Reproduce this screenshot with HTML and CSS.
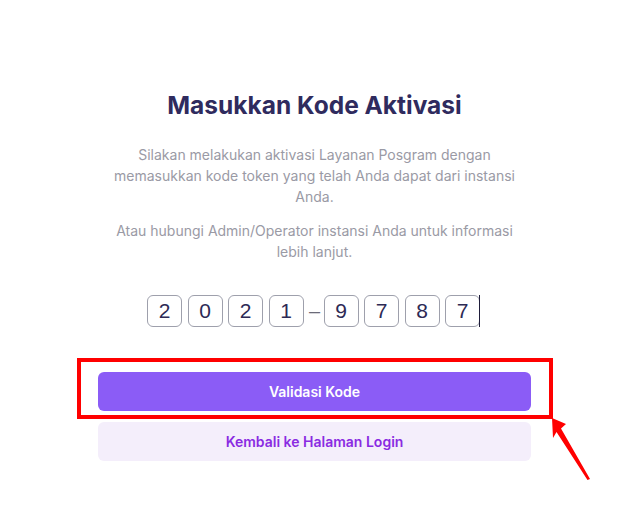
FILE: index.html
```html
<!DOCTYPE html>
<html lang="id">
<head>
<meta charset="utf-8">
<title>Masukkan Kode Aktivasi</title>
<link rel="stylesheet" href="styles.css">
</head>
<body>
<main class="page">
  <section class="card">
    <h1 class="title">Masukkan Kode Aktivasi</h1>
    <p class="desc">Silakan melakukan aktivasi Layanan Posgram dengan memasukkan kode token yang telah Anda dapat dari instansi Anda.</p>
    <p class="desc desc-2">Atau hubungi Admin/Operator instansi Anda untuk informasi lebih lanjut.</p>
    <div class="code">
      <span class="digit">2</span>
      <span class="digit">0</span>
      <span class="digit">2</span>
      <span class="digit">1</span>
      <span class="dash">–</span>
      <span class="digit">9</span>
      <span class="digit">7</span>
      <span class="digit">8</span>
      <span class="digit digit-focus">7</span>
    </div>
    <div class="actions">
      <button class="btn btn-primary">Validasi Kode</button>
      <button class="btn btn-secondary">Kembali ke Halaman Login</button>
      <div class="highlight"></div>
    </div>
  </section>
  <svg class="arrow" width="624" height="517" viewBox="0 0 624 517">
    <polygon points="552,418 566,424 561,428.5 590,479 587.5,480 556.5,432 553,438" fill="#ff0000"/>
  </svg>
</main>
</body>
</html>
```
FILE: styles.css
```css
html, body {
  margin: 0;
  padding: 0;
  background: #ffffff;
}
.page {
  position: relative;
  width: 624px;
  height: 517px;
  overflow: hidden;
  font-family: Inter, "Noto Sans", sans-serif;
}
.card {
  width: 433px;
  margin-left: 98px;
  padding-top: 88px;
  display: flex;
  flex-direction: column;
  align-items: center;
}
.title {
  margin: 0;
  font-size: 24.5px;
  font-weight: 700;
  color: #2f2b5e;
  line-height: 34px;
  letter-spacing: 0;
}
.desc {
  margin: 22px 0 0;
  width: 412px;
  font-size: 14px;
  line-height: 21px;
  color: #9a9aa5;
  text-align: center;
}
.desc-2 {
  margin-top: 13px;
}
.code {
  align-self: flex-start;
  margin-top: 33px;
  margin-left: 49px;
  display: flex;
  align-items: center;
  gap: 5.5px;
}
.digit {
  position: relative;
  box-sizing: border-box;
  width: 35px;
  height: 32px;
  border: 1px solid #9ea0ac;
  border-radius: 6px;
  display: flex;
  align-items: center;
  justify-content: center;
  font-family: "Liberation Sans", Arial, sans-serif;
  font-size: 21px;
  color: #2d2a55;
}
.digit-focus::after {
  content: "";
  position: absolute;
  right: -1px;
  top: -1px;
  bottom: -1px;
  width: 1px;
  background: #1f1d3a;
}
.dash {
  width: 9px;
  text-align: center;
  font-family: "Liberation Sans", Arial, sans-serif;
  font-size: 20px;
  color: #6b6b78;
}
.actions {
  position: relative;
  width: 100%;
  margin-top: 45px;
  display: flex;
  flex-direction: column;
  gap: 11px;
}
.btn {
  width: 100%;
  height: 39px;
  border: none;
  border-radius: 6px;
  font-family: Inter, "Noto Sans", sans-serif;
  font-size: 14px;
  font-weight: 600;
  cursor: pointer;
}
.btn-primary {
  background: #8b5cf6;
  color: #ffffff;
}
.btn-secondary {
  background: #f4eefb;
  color: #8a2be2;
}
.highlight {
  position: absolute;
  left: -21px;
  top: -14px;
  width: 468px;
  height: 53px;
  border: 4px solid #ff0000;
}
.arrow {
  position: absolute;
  left: 0;
  top: 0;
  pointer-events: none;
}
```
